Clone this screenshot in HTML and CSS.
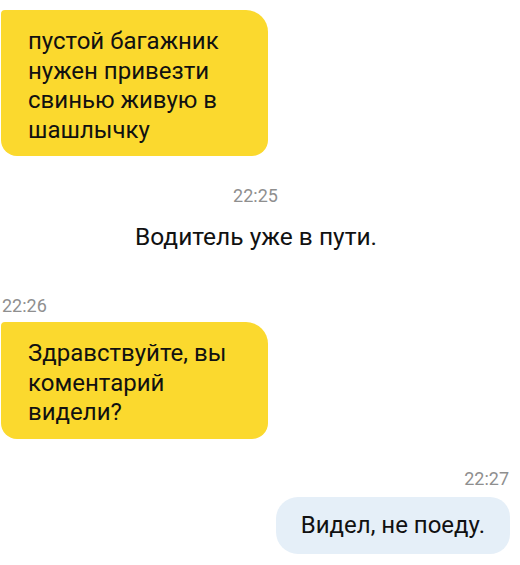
FILE: index.html
```html
<!DOCTYPE html>
<html lang="ru">
<head>
    <meta charset="UTF-8">
    <meta name="viewport" content="width=device-width, initial-scale=1.0">
    <title>Чат с водителем</title>
    <link rel="stylesheet" href="styles.css">
</head>
<body>
    <div class="chat">
        <div class="bubble incoming first">пустой багажник<br>нужен привезти<br>свинью живую в<br>шашлычку</div>
        <div class="time center">22:25</div>
        <div class="system">Водитель уже в пути.</div>
        <div class="time left">22:26</div>
        <div class="bubble incoming">Здравствуйте, вы<br>коментарий<br>видели?</div>
        <div class="time right">22:27</div>
        <div class="bubble outgoing">Видел, не поеду.</div>
    </div>
</body>
</html>
```

FILE: styles.css
```css
body {
    margin: 0;
    background: #fff;
    font-family: Roboto, 'Noto Sans', sans-serif;
    color: #111;
}
.chat {
    width: 520px;
    height: 565px;
    padding-top: 10px;
    box-sizing: border-box;
    display: flex;
    flex-direction: column;
}
.bubble {
    font-size: 24px;
    line-height: 29.5px;
}
.incoming {
    align-self: flex-start;
    width: 240px;
    margin-left: 1px;
    padding: 17px 0 11px 27px;
    background: #fbd92e;
    border-radius: 4px 22px 16px 16px;
}
.outgoing {
    align-self: flex-end;
    margin-right: 10px;
    padding: 14px 25px 14px 25px;
    background: #e5eff8;
    border-radius: 22px 20px 20px 22px;
}
.time {
    font-size: 18px;
    color: #8f8f8f;
    line-height: 20px;
}
.center {
    text-align: center;
    margin-top: 30px;
    padding-right: 9px;
}
.left {
    margin-top: 45px;
    margin-left: 2px;
}
.right {
    text-align: right;
    margin-top: 30px;
    margin-right: 11px;
}
.system {
    text-align: center;
    font-size: 24.5px;
    line-height: 28px;
    margin-top: 17px;
    padding-right: 8px;
}
.left + .bubble {
    margin-top: 6px;
}
.right + .bubble {
    margin-top: 8px;
}
```
